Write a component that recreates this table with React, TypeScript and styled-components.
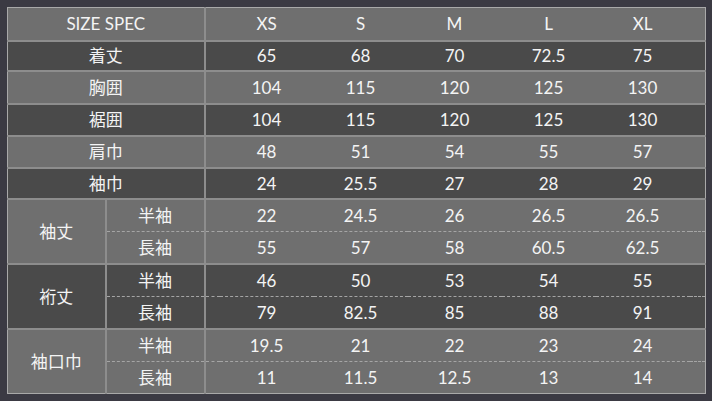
import styled, { createGlobalStyle } from "styled-components";

const GlobalStyle = createGlobalStyle`
  html, body {
    margin: 0;
    padding: 0;
    background: #3b3a43;
  }
`;

const sizes = ["XS", "S", "M", "L", "XL"];

type SingleRow = { label: string; values: string[]; h: number };
type SubRow = { label: string; values: string[] };
type GroupRow = { label: string; rows: SubRow[] };

const singles: SingleRow[] = [
  { label: "着丈", values: ["65", "68", "70", "72.5", "75"], h: 30 },
  { label: "胸囲", values: ["104", "115", "120", "125", "130"], h: 33 },
  { label: "裾囲", values: ["104", "115", "120", "125", "130"], h: 32 },
  { label: "肩巾", values: ["48", "51", "54", "55", "57"], h: 32 },
  { label: "袖巾", values: ["24", "25.5", "27", "28", "29"], h: 31 },
];

const groups: GroupRow[] = [
  {
    label: "袖丈",
    rows: [
      { label: "半袖", values: ["22", "24.5", "26", "26.5", "26.5"] },
      { label: "長袖", values: ["55", "57", "58", "60.5", "62.5"] },
    ],
  },
  {
    label: "裄丈",
    rows: [
      { label: "半袖", values: ["46", "50", "53", "54", "55"] },
      { label: "長袖", values: ["79", "82.5", "85", "88", "91"] },
    ],
  },
  {
    label: "袖口巾",
    rows: [
      { label: "半袖", values: ["19.5", "21", "22", "23", "24"] },
      { label: "長袖", values: ["11", "11.5", "12.5", "13", "14"] },
    ],
  },
];

export default function App() {
  let stripe = 0;
  const nextShade = () => (stripe++ % 2 === 0 ? "light" : "dark");

  return (
    <>
      <GlobalStyle />
      <Page>
        <SpecTable>
          <colgroup>
            <col style={{ width: 98 }} />
            <col style={{ width: 99 }} />
            <col style={{ width: 15 }} />
            {sizes.map((s) => (
              <col key={s} style={{ width: 94 }} />
            ))}
            <col style={{ width: 16 }} />
          </colgroup>
          <tbody>
            <Row shade={nextShade()} h={33}>
              <LabelCell colSpan={2}>SIZE SPEC</LabelCell>
              <Pad />
              {sizes.map((s) => (
                <ValueCell key={s}>{s}</ValueCell>
              ))}
              <Pad />
            </Row>
            {singles.map((r) => (
              <Row key={r.label} shade={nextShade()} h={r.h}>
                <LabelCell colSpan={2}>{r.label}</LabelCell>
                <Pad />
                {r.values.map((v, i) => (
                  <ValueCell key={i}>{v}</ValueCell>
                ))}
                <Pad />
              </Row>
            ))}
            {groups.map((g) => {
              const shade = nextShade();
              return g.rows.map((r, idx) => (
                <Row
                  key={g.label + r.label}
                  shade={shade}
                  sub={idx > 0}
                  h={idx === 0 ? 33 : 32}
                >
                  {idx === 0 && (
                    <LabelCell rowSpan={g.rows.length}>{g.label}</LabelCell>
                  )}
                  <LabelCell>{r.label}</LabelCell>
                  <Pad />
                  {r.values.map((v, i) => (
                    <ValueCell key={i}>{v}</ValueCell>
                  ))}
                  <Pad />
                </Row>
              ));
            })}
          </tbody>
        </SpecTable>
      </Page>
    </>
  );
}

const Page = styled.div`
  padding: 7px;
  width: 698px;
  font-family: "Lato", "Noto Sans CJK JP", sans-serif;
  color: #f4f4f4;
`;

const SpecTable = styled.table`
  width: 698px;
  table-layout: fixed;
  border-collapse: collapse;
  border: 1px solid #a9a9a9;
`;

const Row = styled.tr<{ shade: string; h: number; sub?: boolean }>`
  height: ${({ h }) => h}px;
  background: ${({ shade }) => (shade === "light" ? "#6f6f6f" : "#4a4a4a")};
  border-top: ${({ sub }) =>
    sub ? "1px dashed #a5a5a5" : "2px solid #8d8d8d"};

  &:first-child {
    border-top: none;
  }
`;

const cellBase = `
  padding: 0;
  text-align: center;
  vertical-align: middle;
  font-size: 17px;
  line-height: 1;
  white-space: nowrap;
`;

const LabelCell = styled.td`
  ${cellBase}
  border-right: 2px solid #8d8d8d;
`;

const ValueCell = styled.td`
  ${cellBase}
`;

const Pad = styled.td`
  padding: 0;
`;
